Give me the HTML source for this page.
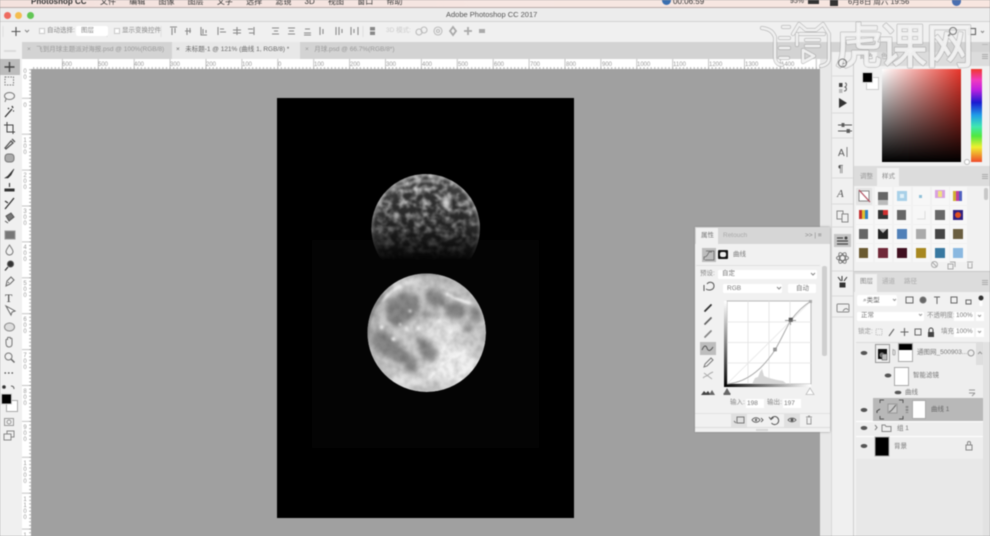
<!DOCTYPE html>
<html><head><meta charset="utf-8"><style>
html,body{margin:0;padding:0;background:#a0a0a0}
#r{position:relative;width:990px;height:536px;overflow:hidden;filter:blur(.55px);font-family:"Liberation Sans","Noto Sans CJK SC",sans-serif;background:#a0a0a0}
#r div{position:absolute}
.t{position:absolute;white-space:nowrap;color:#6e6e6e;font-size:6.5px;line-height:8px}
.w{background:#fff}
svg{position:absolute;overflow:visible}
</style></head><body><div id="r">

<!-- menu bar -->
<div style="left:0;top:0;width:990px;height:8px;background:linear-gradient(90deg,#f4e2de,#f6e6e2 50%,#f8e6e0)"></div>
<div style="left:0;top:7px;width:990px;height:1px;background:#b8aaa8"></div>
<span class="t" style="left:31px;top:-2px;font-size:8px;font-weight:bold;color:#333">Photoshop CC</span>
<span class="t" style="left:100px;top:-2px;font-size:8px;color:#333;word-spacing:11px">文件 编辑 图像 图层 文字 选择 滤镜 3D 视图 窗口 帮助</span>
<span class="t" style="left:673px;top:-2px;font-size:8px;color:#333">00:06:59</span>
<span class="t" style="left:790px;top:-2px;font-size:7px;color:#333">95%</span>
<span class="t" style="left:848px;top:-2px;font-size:7.5px;color:#333">6月8日 周六 19:56</span>
<div style="left:662px;top:0;width:9px;height:5px;background:#3a6fb0;border-radius:0 0 5px 5px"></div>
<div style="left:808px;top:0;width:11px;height:4px;background:#333"></div>
<div style="left:830px;top:0;width:8px;height:6px;background:#333"></div>
<div style="left:952px;top:0;width:9px;height:6px;background:#4a6fb0;border-radius:0 0 5px 5px"></div>

<!-- title bar -->
<div style="left:0;top:8px;width:990px;height:14px;background:#ececec"></div>
<div style="left:0;top:21px;width:990px;height:1px;background:#d4d4d4"></div>
<div style="left:4px;top:12px;width:7px;height:7px;border-radius:50%;background:#ee6a5f"></div>
<div style="left:15px;top:12px;width:7px;height:7px;border-radius:50%;background:#f4bd4f"></div>
<div style="left:27px;top:12px;width:7px;height:7px;border-radius:50%;background:#62c655"></div>
<span class="t" style="left:446px;top:11px;font-size:7.5px;color:#555">Adobe Photoshop CC 2017</span>

<!-- options bar -->
<div style="left:0;top:22px;width:990px;height:20px;background:#f0f0f0"></div>
<svg style="left:0;top:0" width="990" height="60" fill="none" stroke="#8a8a8a" stroke-width="1.100">
<path d="M16 27v9M11.500 31.500h9" stroke="#555"/><path d="M25 30l2 2 2-2"/>
<rect x="39.500" y="28.500" width="5" height="5" stroke="#ccc" fill="#fff"/>
<rect x="114.500" y="28.500" width="5" height="5" stroke="#ccc" fill="#fff"/>
<path d="M170 27h7M172 28v7M175 28v5M185 31h6M187 28v7M190 28v5M201 27v8h6M203 29v5M206 30v3M218 27v8M220 29h4M220 32h6M237 27v8M233 30h8M233 33h8M254 27v8M248 29h5M249 33h5"/>
<path d="M272 28h7M274 31h4M272 34h7M288 28h7M289 31h5M288 34h7M304 33h7M305 29h5M304 35h7M320 27v8M323 29v5M336 27v8M339 27v8M342 29v4M351 27v8M354 29v4M358 27v8"/>
<rect x="370" y="27" width="5" height="3.500" fill="#888" stroke="none"/><rect x="370" y="31.500" width="5" height="3.500" fill="#888" stroke="none"/>
<circle cx="419" cy="32" r="3" stroke="#bbb"/><circle cx="424" cy="30" r="3" stroke="#bbb"/><circle cx="438" cy="31" r="4" stroke="#bbb"/><circle cx="438" cy="31" r="1.500" stroke="#bbb"/>
<path d="M453 27l3 4-3 4-3-4zM468 27v8M464 31h8" stroke="#aaa" stroke-width="1.800"/><rect x="479" y="29" width="6" height="4" fill="#aaa" stroke="none"/>
<rect x="968.500" y="28.500" width="7" height="6" stroke="#666"/><path d="M981 31l1.500 1.500 1.500-1.500"/>
<path d="M161 26v11M107 26v11M363 26v11M3 26v11" stroke="#e0e0e0"/>
<path d="M102 30l2 2 2-2" stroke="#888"/>
</svg>
<span class="t" style="left:47px;top:27px;color:#888">自动选择:</span>
<div style="left:76px;top:26px;width:32px;height:10px;background:#fff;border-radius:2px"></div>
<span class="t" style="left:81px;top:27px;color:#888">图层</span>
<span class="t" style="left:122px;top:27px;color:#888">显示变换控件</span>
<span class="t" style="left:386px;top:27px;color:#ccc">3D 模式:</span>

<!-- tabs -->
<div style="left:0;top:42px;width:990px;height:17px;background:#d3d3d3"></div>
<div style="left:172px;top:42px;width:128px;height:17px;background:#e8e8e8"></div>
<span class="t" style="left:27px;top:46px;color:#999">× &nbsp;&nbsp;飞到月球主题派对海报.psd @ 100%(RGB/8)</span>
<span class="t" style="left:176px;top:46px;color:#666">× &nbsp;&nbsp;未标题-1 @ 121% (曲线 1, RGB/8) *</span>
<span class="t" style="left:305px;top:46px;color:#999">× &nbsp;&nbsp;月球.psd @ 66.7%(RGB/8*)</span>

<!-- tools panel -->
<div style="left:0;top:42px;width:22px;height:494px;background:#f0f0f0"></div>
<div style="left:0;top:59px;width:20px;height:16px;background:#bcbcbc"></div>
<div style="left:4px;top:50px;width:12px;height:2px;background:#dcdcdc"></div>

<!-- rulers -->
<div class="w" style="left:22px;top:59px;width:798px;height:10px"></div>
<div class="w" style="left:22px;top:59px;width:9px;height:477px"></div>
<svg style="left:0;top:0" width="990" height="536">
<defs>
<pattern id="h" x="26" y="59" width="35.900" height="10" patternUnits="userSpaceOnUse"><path d="M.5 0v10" stroke="#c4c4c4" fill="none"/><path d="M0 9h36" stroke="#999" stroke-dasharray="1 2.590" fill="none" stroke-width="1.500"/></pattern>
<pattern id="v" x="22" y="26" width="9" height="35.900" patternUnits="userSpaceOnUse"><path d="M0 .5h9" stroke="#c4c4c4" fill="none"/><path d="M8 0v36" stroke="#999" stroke-dasharray="1 2.590" fill="none" stroke-width="1.500"/></pattern>
</defs>
<rect x="31" y="59" width="789" height="10" fill="url(#h)"/>
<rect x="22" y="69" width="9" height="467" fill="url(#v)"/>
<g font-size="6" fill="#999" font-family="Liberation Sans">
<text x="62" y="66">600</text><text x="98" y="66">500</text><text x="134" y="66">400</text><text x="170" y="66">300</text><text x="206" y="66">200</text><text x="242" y="66">100</text><text x="278" y="66">0</text><text x="314" y="66">100</text><text x="350" y="66">200</text><text x="386" y="66">300</text><text x="422" y="66">400</text><text x="458" y="66">500</text><text x="494" y="66">600</text><text x="530" y="66">700</text><text x="566" y="66">800</text><text x="602" y="66">900</text><text x="637" y="66">1000</text><text x="673" y="66">1100</text><text x="709" y="66">1200</text><text x="745" y="66">1300</text><text x="781" y="66">1400</text>
</g>
<g font-size="6" fill="#999" font-family="Liberation Sans" text-anchor="middle">
<text x="25" y="73">0</text><text x="25" y="79">0</text><text x="25" y="107">0</text>
<text x="25" y="142">1</text><text x="25" y="148">0</text><text x="25" y="154">0</text>
<text x="25" y="177">2</text><text x="25" y="183">0</text><text x="25" y="189">0</text>
<text x="25" y="213">3</text><text x="25" y="219">0</text><text x="25" y="225">0</text>
<text x="25" y="249">4</text><text x="25" y="255">0</text><text x="25" y="261">0</text>
<text x="25" y="285">5</text><text x="25" y="291">0</text><text x="25" y="297">0</text>
<text x="25" y="321">6</text><text x="25" y="327">0</text><text x="25" y="333">0</text>
<text x="25" y="357">7</text><text x="25" y="363">0</text><text x="25" y="369">0</text>
<text x="25" y="393">8</text><text x="25" y="399">0</text><text x="25" y="405">0</text>
<text x="25" y="429">9</text><text x="25" y="435">0</text><text x="25" y="441">0</text>
<text x="25" y="465">1</text><text x="25" y="471">0</text><text x="25" y="477">0</text><text x="25" y="483">0</text>
<text x="25" y="501">1</text><text x="25" y="507">1</text><text x="25" y="513">0</text><text x="25" y="519">0</text>
<text x="25" y="537">1</text>
</g>
</svg>

<!-- tool icons -->
<svg style="left:0;top:0" width="22" height="536" fill="none" stroke="#555" stroke-width="1">
<path d="M9.500 62v10M4.500 67h10" stroke-width="1.400" stroke="#444"/>
<rect x="5" y="77" width="8.500" height="8" stroke="#777" stroke-dasharray="1.500 1.200"/>
<ellipse cx="9.500" cy="96" rx="5" ry="3.500" stroke="#777"/><path d="M6 99l-1 3" stroke="#777"/>
<path d="M5 117l7-8M12 106l1 2M8 108l1 1M14 111l-1 0" stroke="#333" stroke-width="1.300"/>
<path d="M7 122v10h8M4 125h9v9" stroke="#444"/>
<path d="M5 148l6-7 2 2-7 6zM12 139l3 3" stroke="#555" stroke-width="1.300"/>
<rect x="5" y="154" width="9" height="8" rx="3" fill="#aaa" stroke="#777"/>
<path d="M5 178l3-2 6-7-3 6-3 3z" fill="#333" stroke="#333" stroke-width=".6"/>
<path d="M9.500 183v4M5 189h9v2H5z" fill="#333" stroke="#333" stroke-width="1.100"/>
<path d="M5 209l5-6 4-5M5 201l3 2" stroke="#333" stroke-width="1.300"/>
<path d="M6 216l5-3 3 4-5 4zM5 221l3 2" fill="#777"/>
<rect x="5" y="231" width="10" height="8" fill="#777" stroke="#999"/>
<path d="M9.500 245c-2 3-3.500 5-3.500 6.500a3.500 3.500 0 007 0c0-1.500-1.500-3.500-3.500-6.500z" stroke="#777"/>
<circle cx="10.500" cy="264" r="3" fill="#333"/><path d="M8 267l-3 3.500" stroke="#333" stroke-width="1.300"/>
<path d="M6 286l1-5 4-4 3 3-4 4zM8 282l1 1" stroke="#666"/>
<text x="5" y="302" font-family="Liberation Serif" font-size="12" fill="#444" stroke="none">T</text>
<path d="M6 306l5 9 1-3 3-1z" fill="#fff" stroke="#666"/>
<ellipse cx="9.500" cy="327" rx="5" ry="4" fill="#ddd" stroke="#888"/>
<path d="M6 343v-3c0-1 1.500-1 1.500 0v-2c0-1 1.500-1 1.500 0 0-1 1.500-1 1.500 0v1c0-1 1.500-1 1.500 0v5c0 2-1 3-3 3s-3-1-3-4z" fill="#eee" stroke="#777"/>
<circle cx="8.500" cy="356.500" r="3.500" stroke="#777"/><path d="M11 359l3.500 3.500" stroke="#666" stroke-width="1.400"/>
<path d="M4.500 373h1.500M8 373h1.500M11.500 373h1.500" stroke="#444" stroke-width="1.300"/>
<circle cx="4" cy="387" r="1.800" fill="#333" stroke="none"/><path d="M11 386c2 0 3 1 3 3" stroke-width=".9"/>
<rect x="6.500" y="400.500" width="11" height="11" fill="#fff" stroke="#aaa"/>
<rect x="1.500" y="394" width="10" height="10" fill="#000" stroke="#ccc"/>
<rect x="4.500" y="418.500" width="9" height="7" stroke="#999"/><circle cx="9" cy="422" r="2" stroke="#999"/>
<rect x="7" y="431" width="7" height="6" stroke="#888"/><rect x="4" y="434" width="7" height="6" fill="#f0f0f0" stroke="#888"/>
</svg>

<!-- canvas -->
<div style="left:31px;top:69px;width:789px;height:467px;background:#a0a0a0"></div>
<div style="left:820px;top:59px;width:11px;height:477px;background:#e8e8e8"></div>
<div style="left:277px;top:98px;width:297px;height:420px;background:#000"></div>
<div style="left:312px;top:240px;width:227px;height:208px;background:#040404"></div>

<!-- upper sphere -->
<svg style="left:340px;top:160px" width="170" height="120" viewBox="0 0 510 360">
<defs>
<filter id="tu" x="0" y="0" width="100%" height="100%"><feTurbulence type="fractalNoise" baseFrequency=".045 .05" numOctaves="3" seed="23"/><feColorMatrix values="0 0 0 0 .66 0 0 0 0 .66 0 0 0 0 .66 2.300 0 0 0 -.9"/><feGaussianBlur stdDeviation="2"/></filter>
<radialGradient id="s1" cx=".5" cy=".5" r=".5"><stop offset=".7" stop-color="#333"/><stop offset=".93" stop-color="#444"/><stop offset="1" stop-color="#777"/></radialGradient>
<linearGradient id="fd" x1="0" y1="0" x2="0" y2="1"><stop offset="0" stop-color="#fff"/><stop offset=".35" stop-color="#ddd"/><stop offset=".55" stop-color="#999"/><stop offset=".72" stop-color="#444"/><stop offset=".87" stop-color="#000"/></linearGradient>
<mask id="m1"><rect x="90" y="40" width="335" height="300" fill="url(#fd)"/></mask>
<clipPath id="c1"><circle cx="257" cy="205" r="163"/></clipPath>
<filter id="b5" x="-30%" y="-30%" width="160%" height="160%"><feGaussianBlur stdDeviation="6"/></filter>
<filter id="b3" x="-30%" y="-30%" width="160%" height="160%"><feGaussianBlur stdDeviation="3"/></filter>
</defs>
<g mask="url(#m1)"><g clip-path="url(#c1)">
<circle cx="257" cy="205" r="163" fill="url(#s1)"/>
<rect x="90" y="40" width="335" height="300" filter="url(#tu)"/>
<ellipse cx="318" cy="128" rx="13" ry="13" fill="#fff" filter="url(#b5)"/>
<path d="M150 92c40-25 100-35 150-25" stroke="#ccc" stroke-width="9" fill="none" opacity=".45" filter="url(#b3)"/>
<circle cx="257" cy="205" r="160" fill="none" stroke="#aaa" stroke-width="6" opacity=".5" filter="url(#b3)"/>
</g></g>
</svg>

<!-- lower moon -->
<svg style="left:360px;top:265px" width="135" height="135" viewBox="0 0 405 405">
<defs>
<radialGradient id="s2" cx=".55" cy=".55" r=".55"><stop offset="0" stop-color="#d0d0d0"/><stop offset=".8" stop-color="#cacaca"/><stop offset=".96" stop-color="#b8b8b8"/><stop offset="1" stop-color="#909090"/></radialGradient>
<clipPath id="c2"><circle cx="200" cy="203" r="178"/></clipPath>
<filter id="bm" x="-30%" y="-30%" width="160%" height="160%"><feGaussianBlur stdDeviation="8"/></filter>
<filter id="bl" x="-30%" y="-30%" width="160%" height="160%"><feGaussianBlur stdDeviation="14"/></filter>
<filter id="bs" x="-50%" y="-50%" width="200%" height="200%"><feGaussianBlur stdDeviation="3"/></filter>
<filter id="tu2" x="0" y="0" width="100%" height="100%"><feTurbulence type="fractalNoise" baseFrequency=".05" numOctaves="3" seed="4"/><feColorMatrix values="0 0 0 0 0 0 0 0 0 0 0 0 0 0 0 2 0 0 0 -.75"/><feGaussianBlur stdDeviation="2"/></filter>
</defs>
<g clip-path="url(#c2)">
<circle cx="200" cy="203" r="178" fill="url(#s2)"/>
<g fill="#f0f0f0" filter="url(#bl)"><ellipse cx="275" cy="300" rx="80" ry="60"/><ellipse cx="250" cy="200" rx="60" ry="35" opacity=".7"/><ellipse cx="130" cy="350" rx="70" ry="20" opacity=".8"/><ellipse cx="120" cy="55" rx="70" ry="14" transform="rotate(-15 120 55)"/></g>
<g fill="#868686" filter="url(#bm)">
<path d="M88 105L135 80 175 95 180 130 155 165 110 190 85 170 75 130z"/>
<path d="M195 78L240 75 262 110 235 128 200 118z"/>
<path d="M250 118L295 105 322 135 300 165 262 155z"/>
<path d="M325 128L355 125 365 165 340 175z"/>
<path d="M35 200L75 195 130 250 175 290 160 310 110 290 60 265 38 240z"/>
<path d="M165 215L205 225 235 270 215 295 185 275z"/>
<ellipse cx="152" cy="310" rx="17" ry="14"/>
<ellipse cx="322" cy="190" rx="13" ry="11"/>
<ellipse cx="200" cy="148" rx="22" ry="9"/>
</g>
<g fill="#f2f2f2" filter="url(#bs)">
<circle cx="65" cy="187" r="5"/><circle cx="140" cy="192" r="6"/><circle cx="100" cy="222" r="6"/><circle cx="236" cy="168" r="6"/><circle cx="272" cy="200" r="6"/><circle cx="300" cy="206" r="5"/><circle cx="248" cy="296" r="9"/><circle cx="108" cy="335" r="5"/><circle cx="150" cy="138" r="4"/><circle cx="175" cy="190" r="5"/><circle cx="120" cy="178" r="4"/>
<path d="M258 85c20 12 45 22 75 30" stroke="#f4f4f4" stroke-width="7" fill="none"/>
<path d="M70 110c10-22 30-38 55-48" stroke="#f0f0f0" stroke-width="6" fill="none"/>
<path d="M248 296l-40 45M248 296l70-40M248 296l60 50M248 296l5-55" stroke="#fafafa" stroke-width="4" fill="none"/>
</g>
<rect x="15" y="20" width="375" height="370" filter="url(#tu2)" opacity=".16"/>
</g>
</svg>

<!-- dock -->
<div style="left:831px;top:42px;width:23px;height:494px;background:#f0f0f0"></div>
<div style="left:831px;top:42px;width:1px;height:494px;background:#d8d8d8"></div>
<div style="left:853px;top:42px;width:1px;height:494px;background:#cfcfcf"></div>
<div style="left:831px;top:42px;width:159px;height:10px;background:#d3d3d3"></div>
<svg style="left:0;top:0" width="990" height="536" fill="none" stroke="#666" stroke-width="1">
<g stroke="#dcdcdc"><path d="M832 76h21M832 113h21M832 138h21M832 178h21M832 204h21M832 227h21M832 271h21M832 296h21M832 317h21"/></g>
<circle cx="842.500" cy="63" r="4" stroke="#777"/><path d="M842.500 61v2.500h2" stroke="#777"/>
<rect x="839" y="83" width="3.500" height="4" fill="#444" stroke="none"/><rect x="839" y="89" width="3.500" height="4" fill="#bbb" stroke="none"/><path d="M845 83c2 0 2 3 0 4 2 1 2 4-1 4"/>
<path d="M839 98v10l8-5z" fill="#333" stroke="none"/>
<path d="M838 125h14M838 131h14" stroke="#555"/><rect x="842" y="123.500" width="2" height="3" fill="#555"/><rect x="847" y="129.500" width="2.500" height="3" fill="#555"/>
<text x="838" y="156" font-size="10" fill="#555" stroke="none" font-family="Liberation Sans">A</text><path d="M847 147v10" stroke-width=".8"/>
<text x="838" y="172" font-size="10" fill="#555" stroke="none" font-family="Liberation Sans">¶</text>
<text x="837" y="197" font-size="11" font-style="italic" fill="#555" stroke="none" font-family="Liberation Serif">A</text>
<rect x="837" y="211" width="6" height="8" stroke="#888"/><rect x="842" y="214" width="6" height="8" fill="#f0f0f0" stroke="#888"/>
<rect x="834" y="234" width="17" height="13" fill="#c4c4c4" stroke="none"/>
<path d="M837 238h6M837 241h11M837 244h11" stroke="#444" stroke-width="1.200"/><circle cx="846" cy="238" r="1.500" fill="#444" stroke="none"/>
<ellipse cx="842.500" cy="258" rx="6" ry="2.500" transform="rotate(60 842.500 258)" stroke-width=".8"/><ellipse cx="842.500" cy="258" rx="6" ry="2.500" transform="rotate(-60 842.500 258)" stroke-width=".8"/><ellipse cx="842.500" cy="258" rx="6" ry="2.500" stroke-width=".8"/>
<path d="M840 283h5v4h-5z" fill="#333" stroke="#333"/><path d="M838 277l3 4M842 276v5M847 277l-3 4" stroke="#333"/>
<rect x="837" y="304" width="12" height="8" rx="1" stroke="#888"/><path d="M843 311c2-3 4-3 5-1" stroke-width=".8"/>
</svg>

<!-- right panels -->
<div style="left:854px;top:52px;width:136px;height:484px;background:#f1f1f1"></div>
<div style="left:854px;top:52px;width:136px;height:14px;background:#dcdcdc"></div>
<div style="left:854px;top:52px;width:23px;height:14px;background:#f1f1f1"></div>
<span class="t" style="left:860px;top:53px;color:#999">颜色</span>
<span class="t" style="left:881px;top:53px;color:#aaa">色板</span>
<div style="left:866px;top:77px;width:11px;height:11px;background:#fff;border:1px solid #ccc"></div>
<div style="left:862px;top:72px;width:9px;height:9px;background:#000;border:1px solid #ddd"></div>
<div style="left:882px;top:69px;width:79px;height:93px;background:linear-gradient(to top,#000,rgba(0,0,0,0)),linear-gradient(to right,#fff,#e8352a)"></div>
<div style="left:971px;top:69px;width:11px;height:93px;background:linear-gradient(to bottom,#f0382a,#f03ac0 12%,#c020e0 22%,#1a1ad0 36%,#20a0e8 50%,#40e8b0 62%,#50e840 72%,#f0f030 84%,#f04a2a)"></div>
<div style="left:964px;top:159px;width:4px;height:4px;border:1px solid #bbb;border-radius:50%;background:#fff"></div>

<div style="left:854px;top:166px;width:136px;height:20px;background:#dcdcdc"></div>
<div style="left:877px;top:168px;width:22px;height:18px;background:#f1f1f1"></div>
<span class="t" style="left:860px;top:173px;color:#999">调整</span>
<span class="t" style="left:882px;top:173px;color:#888">样式</span>
<svg style="left:0;top:0" width="990" height="290">
<g fill="#f7f7f7">
<rect x="875" y="187" width="17" height="18"/><rect x="894" y="187" width="17" height="18"/><rect x="913" y="187" width="17" height="18"/><rect x="932" y="187" width="17" height="18"/><rect x="950" y="187" width="17" height="18"/>
<rect x="856" y="206" width="17" height="18"/><rect x="875" y="206" width="17" height="18"/><rect x="894" y="206" width="17" height="18"/><rect x="913" y="206" width="17" height="18"/><rect x="932" y="206" width="17" height="18"/><rect x="950" y="206" width="17" height="18"/>
<rect x="856" y="225" width="17" height="18"/><rect x="875" y="225" width="17" height="18"/><rect x="894" y="225" width="17" height="18"/><rect x="913" y="225" width="17" height="18"/><rect x="932" y="225" width="17" height="18"/><rect x="950" y="225" width="17" height="18"/>
<rect x="856" y="244" width="17" height="18"/><rect x="875" y="244" width="17" height="18"/><rect x="894" y="244" width="17" height="18"/><rect x="913" y="244" width="17" height="18"/><rect x="932" y="244" width="17" height="18"/><rect x="950" y="244" width="17" height="18"/>
</g>
<rect x="856" y="188" width="16" height="17" fill="#e4e4e4"/>
<rect x="859" y="191" width="10" height="10" fill="#fff" stroke="#888"/><path d="M859 190l11 12" stroke="#b05060" stroke-width="1.200"/>
<rect x="878" y="192" width="10" height="9" fill="#666"/><rect x="878" y="200" width="10" height="5" fill="#bbb"/>
<rect x="897" y="191" width="10" height="10" fill="#a8d0e8"/><rect x="900" y="194" width="4" height="4" fill="#e0f0f8"/>
<rect x="919" y="195" width="3" height="3" fill="#90c0d8"/>
<rect x="935" y="190" width="10" height="8" fill="#d8a0e0"/><rect x="938" y="191" width="4" height="6" fill="#f0e080"/>
<rect x="953" y="191" width="3" height="10" fill="#d0b030"/><rect x="956" y="191" width="3" height="10" fill="#c040a0"/><rect x="959" y="191" width="3" height="10" fill="#5060c0"/>
<rect x="859" y="210" width="3" height="9" fill="#c03030"/><rect x="862" y="210" width="3" height="9" fill="#e0c030"/><rect x="865" y="210" width="3" height="9" fill="#3080c0"/>
<rect x="878" y="210" width="10" height="9" fill="#333"/><rect x="883" y="210" width="5" height="5" fill="#d03030"/>
<rect x="897" y="210" width="9" height="10" fill="#666"/><path d="M917 219h8v-8" stroke="#ddd" fill="none"/>
<rect x="935" y="210" width="10" height="10" fill="#666"/><rect x="953" y="210" width="10" height="10" fill="#302080"/><circle cx="958" cy="215" r="3" fill="#e05020"/>
<rect x="859" y="229" width="9" height="10" fill="#666"/><rect x="878" y="229" width="10" height="10" fill="#222"/><path d="M879 229l4 4 4-4z" fill="#bbb"/>
<rect x="897" y="229" width="10" height="10" fill="#5080b8"/><rect x="916" y="229" width="10" height="10" fill="#aaa"/>
<rect x="935" y="229" width="10" height="10" fill="#444"/><rect x="953" y="229" width="10" height="10" fill="#6a5e40"/>
<rect x="859" y="248" width="9" height="10" fill="#6a5a30"/><rect x="878" y="248" width="10" height="10" fill="#702838"/>
<rect x="897" y="248" width="10" height="10" fill="#401020"/><rect x="916" y="248" width="10" height="10" fill="#a88820"/>
<rect x="935" y="248" width="10" height="10" fill="#3878a0"/><rect x="953" y="248" width="10" height="10" fill="#8ab8e0"/>
<rect x="984" y="188" width="4" height="12" fill="#c8c8c8" rx="2"/>
<g fill="none" stroke="#aaa"><circle cx="934.500" cy="264.500" r="3"/><path d="M932 262l5 5M950 262h5v5M948 264h5v5h-5zM967 262h6M968 263v5h4v-5"/></g>
<g fill="#aaa"><rect x="982" y="54" width="6" height="1"/><rect x="982" y="56" width="6" height="1"/><rect x="982" y="58" width="6" height="1"/><rect x="982" y="174" width="6" height="1"/><rect x="982" y="176" width="6" height="1"/><rect x="982" y="178" width="6" height="1"/><rect x="982" y="44" width="6" height="1" opacity=".6"/></g>
</svg>

<div style="left:854px;top:271px;width:136px;height:1px;background:#c8c8c8"></div>
<!-- layers -->
<div style="left:854px;top:272px;width:136px;height:20px;background:#dcdcdc"></div>
<div style="left:855px;top:274px;width:22px;height:18px;background:#f1f1f1"></div>
<div style="left:854px;top:292px;width:136px;height:244px;background:#f1f1f1"></div>
<span class="t" style="left:860px;top:278px;color:#888">图层</span>
<span class="t" style="left:882px;top:278px;color:#aaa">通道</span>
<span class="t" style="left:904px;top:278px;color:#aaa">路径</span>
<svg style="left:0;top:0" width="990" height="536"><g fill="#aaa"><rect x="982" y="280" width="6" height="1"/><rect x="982" y="282" width="6" height="1"/><rect x="982" y="284" width="6" height="1"/></g></svg>
<div class="w" style="left:857px;top:295px;width:40px;height:11px;border-radius:2px"></div>
<span class="t" style="left:863px;top:297px;color:#666">⌕类型</span>
<div class="w" style="left:857px;top:312px;width:67px;height:9px;border-radius:1px"></div>
<span class="t" style="left:861px;top:312px;color:#777">正常</span>
<span class="t" style="left:927px;top:312px;color:#888">不透明度:</span>
<div class="w" style="left:954px;top:312px;width:20px;height:9px"></div><span class="t" style="left:956px;top:312px;color:#777">100%</span>
<div class="w" style="left:976px;top:312px;width:8px;height:9px"></div>
<span class="t" style="left:858px;top:328px;color:#999">锁定:</span>
<span class="t" style="left:941px;top:328px;color:#888">填充:</span>
<div class="w" style="left:954px;top:328px;width:20px;height:9px"></div><span class="t" style="left:956px;top:328px;color:#777">100%</span>
<div class="w" style="left:976px;top:328px;width:8px;height:9px"></div>

<div style="left:856px;top:342px;width:127px;height:117px;background:#eeeeee"></div>
<div style="left:856px;top:342px;width:127px;height:1px;background:#dcdcdc"></div>
<div style="left:856px;top:459px;width:134px;height:77px;background:#e8e8e8"></div>
<div style="left:873px;top:398px;width:110px;height:23px;background:#b8b8b8"></div>
<div style="left:856px;top:421px;width:127px;height:1px;background:#fff"></div>
<div style="left:856px;top:436px;width:127px;height:1px;background:#fff"></div>
<div style="left:983px;top:342px;width:7px;height:194px;background:#e2e2e2"></div>
<div style="left:976px;top:343px;width:7px;height:22px;background:#dedede"></div>

<svg style="left:0;top:0" width="990" height="536" fill="none" stroke="#777" stroke-width="1">
<rect x="906" y="297" width="7" height="6" stroke="#666"/><circle cx="923" cy="300" r="3" fill="#666"/><path d="M934 297h6M937 297v7M951 297h6v6h-6zM966 300h5v4h-5z" stroke="#666"/>
<circle cx="981" cy="298" r="2.500" fill="#333" stroke="none"/><rect x="979.500" y="301" width="3" height="5" fill="#fff" stroke="none"/>
<path d="M919 314l1.500 1.500 1.500-1.500M978 315l1.500 1.500 1.500-1.500M978 331l1.500 1.500 1.500-1.500M893 299l1.500 1.500 1.500-1.500" stroke="#999"/>
<rect x="876" y="329" width="6" height="6" stroke="#bbb" stroke-dasharray="1 1"/><path d="M889 336l5-7" stroke="#666" stroke-width="1.100"/><path d="M904.500 328v8M900.500 332h8" stroke="#666" stroke-width="1.100"/><rect x="915" y="329" width="6" height="6" stroke="#666"/>
<rect x="928" y="332" width="6" height="5" fill="#444" stroke="none"/><path d="M929 332v-2a2 2 0 014 0v2" stroke="#444"/>
<g stroke="#555" fill="#555" stroke-width=".7"><ellipse cx="864" cy="353" rx="3" ry="1.600"/><ellipse cx="888" cy="375.500" rx="3" ry="1.600"/><ellipse cx="898" cy="392.500" rx="3" ry="1.400"/><ellipse cx="864" cy="410" rx="3" ry="1.600"/><ellipse cx="864" cy="428" rx="3" ry="1.600"/><ellipse cx="864" cy="446" rx="3" ry="1.600"/></g>
<rect x="875.500" y="344.500" width="14" height="18" fill="#eee" stroke="#999"/><rect x="878" y="349" width="9" height="10" fill="#111" stroke="none"/><circle cx="882" cy="355" r="2.500" fill="#777" stroke="none"/><rect x="882" y="354" width="5" height="6" fill="#bbb" stroke="#444" stroke-width=".5"/>
<path d="M893 349v6M893 351a1 1 0 012 0v3a1 1 0 01-2 0" stroke="#aaa"/>
<rect x="898.500" y="343.500" width="14" height="18" fill="#fff" stroke="#aaa"/><rect x="899" y="344" width="13" height="6" fill="#000" stroke="none"/>
<rect x="894.500" y="367.500" width="14" height="18" fill="#fff" stroke="#aaa"/>
<circle cx="971" cy="353" r="3" stroke="#999"/><path d="M978 354l2-2 2 2" stroke="#999"/>
<path d="M969 390h6M969 393h6M972 396l3-3" stroke="#999"/>
<path d="M884 400h-4v3M899 400h4v3M880 416v3h4M903 416v3h-4" stroke="#555"/>
<rect x="888" y="404" width="9" height="9" fill="#c8c8c8" stroke="#999"/><path d="M889 412c3-1 4-4 7-7" stroke="#666"/>
<path d="M880 409l-3 2v2" stroke="#444"/>
<path d="M907 406v7" stroke="#888" stroke-width="2.500" stroke-dasharray="2 1"/>
<rect x="912.500" y="400.500" width="13" height="18" fill="#fff" stroke="#aaa"/>
<path d="M875 425l2 2.500-2 2.500" stroke="#777"/><path d="M882 425h3l1 1.500h5v5h-9z" stroke="#888"/>
<rect x="875" y="437" width="14" height="19" fill="#000" stroke="#aaa"/>
<rect x="966" y="445" width="6" height="5" stroke="#888"/><path d="M967.500 445v-2a1.500 1.500 0 013 0v2" stroke="#888"/>
</svg>
<span class="t" style="left:917px;top:349px;color:#777">通图网_500903...</span>
<span class="t" style="left:913px;top:372px;color:#777">智能滤镜</span>
<span class="t" style="left:905px;top:389px;color:#777">曲线</span>
<span class="t" style="left:931px;top:406px;color:#666">曲线 1</span>
<span class="t" style="left:897px;top:425px;color:#777">组 1</span>
<span class="t" style="left:894px;top:443px;color:#777">背景</span>

<!-- properties panel -->
<div style="left:695px;top:227px;width:135px;height:205px;background:#f1f1f1;box-shadow:0 0 2px #888"></div>
<div style="left:695px;top:227px;width:135px;height:17px;background:#d6d6d6"></div>
<div style="left:696px;top:228px;width:22px;height:16px;background:#f1f1f1"></div>
<span class="t" style="left:701px;top:232px;color:#777">属性</span>
<span class="t" style="left:723px;top:232px;color:#aaa">Retouch</span>
<span class="t" style="left:805px;top:232px;color:#888">&gt;&gt; | ≡</span>
<div style="left:702px;top:248px;width:14px;height:14px;background:#bdbdbd"></div>
<div style="left:718px;top:250px;width:10px;height:9px;background:#111;border-radius:1px"></div>
<div style="left:720px;top:252px;width:6px;height:5px;background:#eee;border-radius:2px"></div>
<span class="t" style="left:733px;top:251px;color:#777">曲线</span>
<div style="left:696px;top:265px;width:124px;height:1px;background:#e0e0e0"></div>
<span class="t" style="left:700px;top:270px;color:#888">预设:</span>
<div class="w" style="left:718px;top:270px;width:99px;height:9px;border-radius:1px"></div>
<span class="t" style="left:722px;top:270px;color:#777">自定</span>
<div class="w" style="left:723px;top:284px;width:59px;height:9px;border-radius:1px"></div>
<span class="t" style="left:727px;top:285px;color:#777">RGB</span>
<div class="w" style="left:788px;top:284px;width:28px;height:9px;border-radius:1px"></div>
<span class="t" style="left:796px;top:285px;color:#777">自动</span>
<div style="left:700px;top:342px;width:16px;height:13px;background:#bdbdbd"></div>
<div style="left:822px;top:266px;width:5px;height:90px;background:#cfcfcf;border-radius:2px"></div>
<div style="left:695px;top:413px;width:135px;height:1px;background:#e2e2e2"></div>
<div style="left:731px;top:414px;width:16px;height:13px;background:#e0e0e0"></div>
<div style="left:784px;top:414px;width:16px;height:13px;background:#e0e0e0"></div>
<div style="left:695px;top:427px;width:135px;height:1px;background:#dcdcdc"></div>
<div style="left:756px;top:429px;width:12px;height:2px;background:#d6d6d6"></div>
<span class="t" style="left:730px;top:399px;color:#888">输入:</span>
<div class="w" style="left:746px;top:399px;width:18px;height:9px"></div>
<span class="t" style="left:747px;top:400px;color:#777">198</span>
<span class="t" style="left:767px;top:399px;color:#888">输出:</span>
<div class="w" style="left:783px;top:399px;width:18px;height:9px"></div>
<span class="t" style="left:784px;top:400px;color:#777">197</span>
<svg style="left:0;top:0" width="990" height="536" fill="none">
<defs><linearGradient id="gl" x1="0" y1="0" x2="0" y2="1"><stop offset="0" stop-color="#fff"/><stop offset="1" stop-color="#000"/></linearGradient><linearGradient id="gb" x1="0" y1="0" x2="1" y2="0"><stop offset="0" stop-color="#000"/><stop offset="1" stop-color="#fff"/></linearGradient></defs>
<path d="M704 260v-3c3 0 4-3 5-5h3M706 251h8v9h-9" stroke="#666" stroke-width=".8"/>
<path d="M811 273l2 2 2-2M777 287l2 2 2-2" stroke="#888"/>
<rect x="727" y="301" width="84" height="83" fill="#fff" stroke="#aaa" stroke-width=".8"/>
<path d="M748 301v83M769 301v83M790 301v83M727 322h84M727 342.500h84M727 363h84" stroke="#e2e2e2" stroke-width=".8"/>
<path d="M727 384L811 301" stroke="#e6e6e6" stroke-width=".8"/>
<path d="M752 384l3-6 3-1 2-5 2-3 2 7 5 2 8 2 6 1 4 3z" fill="#d6d6d6"/>
<rect x="724" y="301" width="3" height="86" fill="url(#gl)"/>
<rect x="724" y="384" width="87" height="3" fill="url(#gb)"/>
<path d="M727 384C750 382 765 365 775 350C782 338 786 328 791 320C797 312 803 306 811 301" stroke="#aaa" stroke-width="1"/>
<rect x="773.500" y="348" width="3" height="3" fill="#999" stroke="#777" stroke-width=".5"/>
<rect x="789" y="318" width="3.500" height="3.500" fill="#555" stroke="#444" stroke-width=".5"/>
<path d="M790.500 321v4M785 320.500h11" stroke="#777" stroke-width=".7"/>
<rect x="809" y="300" width="3" height="3" fill="#aaa"/>
<path d="M727 388l-3.500 6h7z" fill="#666"/><rect x="723.500" y="393" width="7" height="2" fill="#666"/>
<path d="M810 388l-4 6.500h8z" fill="#fff" stroke="#bbb" stroke-width=".8"/>
<path d="M704 285v6M706 289c3 2 8 1 8-3s-5-5-7-2" stroke="#555"/>
<g stroke-width="1.800" stroke-linecap="round"><path d="M705 311l6-6" stroke="#333"/><path d="M705 324l6-6" stroke="#666"/><path d="M705 337l6-6" stroke="#888"/></g>
<path d="M702 350c2-5 4-5 5-2s3 4 6-1" stroke="#555" stroke-width="1"/>
<path d="M704 367l1-3 6-6 2 2-6 6z" stroke="#777"/>
<path d="M703 378c3-3 3-1 5-3s3-2 5-3M704 373l8 6" stroke="#aaa"/>
<path d="M701 395l3-4 2 2 2-2 3 4z" fill="#444"/><path d="M709 395l3-5 3 5z" fill="#666"/>
<path d="M737 417h7v6h-7zM734 421l2 2" stroke="#777"/><path d="M752 420c2-3 6-3 8 0-2 3-6 3-8 0zM761 418l2 2-2 2" stroke="#666"/><circle cx="756" cy="420" r="1.200" fill="#666"/>
<path d="M771 419a4 4 0 11.500 4M769 417l2 2.500 2.500-2" stroke="#555"/><path d="M788 420c2-2.500 6-2.500 8 0-2 2.500-6 2.500-8 0z" stroke="#666"/><circle cx="792" cy="420" r="1.500" fill="#555"/>
<path d="M806 417h6M807 418v6h4v-6M808 416h2" stroke="#999"/>
</svg>

<!-- watermark -->
<svg style="left:0;top:0" width="990" height="536" fill="none">
<g stroke="#8c8c8c" stroke-width="4" stroke-linecap="round" stroke-linejoin="round" opacity=".6">
<path d="M762 28c8 1 11 4 13 9v20c0 5 3 8 7 8M783 27h6M780 38h9M780 48h9M780 58h8"/>
<path d="M793 34l6-10 7 6h10l7-6 6 10v24c0 5-3 7-8 8M800 34h24M806 40h13M806 46h13M797 34v11"/>
<path d="M803 50l11 6-11 6z"/>
</g>
<g stroke="#f6f6f6" stroke-width="2.800" stroke-linecap="round" stroke-linejoin="round" opacity=".9">
<path d="M762 28c8 1 11 4 13 9v20c0 5 3 8 7 8M783 27h6M780 38h9M780 48h9M780 58h8"/>
<path d="M793 34l6-10 7 6h10l7-6 6 10v24c0 5-3 7-8 8M800 34h24M806 40h13M806 46h13M797 34v11"/>
<path d="M803 50l11 6-11 6z"/>
</g>
<g font-size="48" font-family="Noto Sans CJK SC,sans-serif" stroke="#8c8c8c" stroke-width="2.400" stroke-linejoin="round" opacity=".6">
<text x="835" y="63">虎</text><text x="879" y="63">课</text><text x="926" y="63">网</text>
</g>
<g font-size="48" font-family="Noto Sans CJK SC,sans-serif" fill="#f6f6f6" stroke="#f6f6f6" stroke-width="1.200" stroke-linejoin="round" opacity=".9">
<text x="835" y="63">虎</text><text x="879" y="63">课</text><text x="926" y="63">网</text>
</g>
<circle cx="953" cy="31" r="3.500" stroke="#777"/><path d="M950 34l-2 2" stroke="#777"/>
<circle cx="842.500" cy="63" r="4" stroke="#777"/>
</svg>
</div></body></html>
